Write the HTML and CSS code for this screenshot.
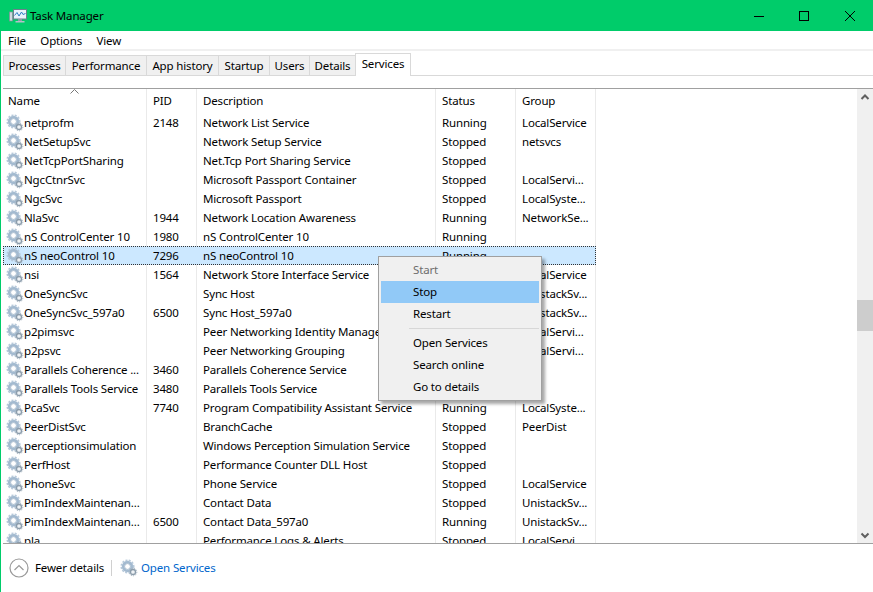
FILE: index.html
```html
<!DOCTYPE html>
<html lang="en">
<head>
<meta charset="utf-8">
<title>Task Manager</title>
<link rel="stylesheet" href="styles.css">
</head>
<body>
<svg class="defs" width="0" height="0" aria-hidden="true">
  <symbol id="gear" viewBox="0 0 18 18">
    <circle cx="7.5" cy="7.5" r="4.4" fill="none" stroke="#a3bad0" stroke-width="2.6"/>
    <circle cx="7.5" cy="7.5" r="6.2" fill="none" stroke="#b7c9da" stroke-width="1.7" stroke-dasharray="2 1.3"/>
    <circle cx="7.5" cy="7.5" r="2.9" fill="#fff" stroke="#8aa3bc" stroke-width="0.7"/>
    <circle cx="13" cy="13" r="2.5" fill="#eef2f5" stroke="#8b9cab" stroke-width="1.3"/>
    <circle cx="13" cy="13" r="3.8" fill="none" stroke="#a2b1be" stroke-width="1" stroke-dasharray="1.3 1"/>
  </symbol>
</svg>
<div class="window">
  <header class="titlebar">
    <svg class="app-icon" width="18" height="16" viewBox="0 0 18 16">
      <rect x="0.5" y="4" width="3" height="9" fill="#cfd8de" stroke="#7f8f99" stroke-width="0.7"/>
      <rect x="4.5" y="1.5" width="13" height="9.5" fill="#e8f3fb" stroke="#6d7f8c"/>
      <path d="M5.5 7.5 L8 4.5 L10 8 L12.5 4 L14 6.5 L16.5 5.5" fill="none" stroke="#2d7fc4"/>
      <rect x="9" y="11" width="4" height="2" fill="#8b9aa5"/>
      <rect x="6.5" y="13" width="9" height="1.5" fill="#b4c0c8"/>
    </svg>
    <span class="title">Task Manager</span>
    <div class="controls">
      <svg width="10" height="10" viewBox="0 0 10 10"><path d="M0 5.5H10" stroke="#000" fill="none"/></svg>
      <svg width="10" height="10" viewBox="0 0 10 10"><rect x="0.5" y="0.5" width="9" height="9" stroke="#000" fill="none"/></svg>
      <svg class="close" width="10" height="10" viewBox="0 0 10 10"><path d="M0 0L10 10M10 0L0 10" stroke="#000" fill="none"/></svg>
    </div>
  </header>
  <nav class="menubar">
    <span>File</span><span>Options</span><span>View</span>
  </nav>
  <div class="tabs">
    <span class="tab">Processes</span>
    <span class="tab">Performance</span>
    <span class="tab">App history</span>
    <span class="tab">Startup</span>
    <span class="tab">Users</span>
    <span class="tab">Details</span>
    <span class="tab active">Services</span>
  </div>
  <main class="pane">
    <div class="listview">
      <div class="row head">
        <span class="cell name">Name</span><span class="cell">PID</span><span class="cell">Description</span><span class="cell">Status</span><span class="cell">Group</span>
        <svg class="sort" width="9" height="5" viewBox="0 0 9 5"><path d="M0.5 4.5L4.5 0.5L8.5 4.5" fill="none" stroke="#777"/></svg>
      </div>
      <div class="row"><span class="cell name"><svg class="gear"><use href="#gear"/></svg>netprofm</span><span class="cell">2148</span><span class="cell">Network List Service</span><span class="cell">Running</span><span class="cell">LocalService</span></div>
      <div class="row"><span class="cell name"><svg class="gear"><use href="#gear"/></svg>NetSetupSvc</span><span class="cell"></span><span class="cell">Network Setup Service</span><span class="cell">Stopped</span><span class="cell">netsvcs</span></div>
      <div class="row"><span class="cell name"><svg class="gear"><use href="#gear"/></svg>NetTcpPortSharing</span><span class="cell"></span><span class="cell">Net.Tcp Port Sharing Service</span><span class="cell">Stopped</span><span class="cell"></span></div>
      <div class="row"><span class="cell name"><svg class="gear"><use href="#gear"/></svg>NgcCtnrSvc</span><span class="cell"></span><span class="cell">Microsoft Passport Container</span><span class="cell">Stopped</span><span class="cell">LocalServi...</span></div>
      <div class="row"><span class="cell name"><svg class="gear"><use href="#gear"/></svg>NgcSvc</span><span class="cell"></span><span class="cell">Microsoft Passport</span><span class="cell">Stopped</span><span class="cell">LocalSyste...</span></div>
      <div class="row"><span class="cell name"><svg class="gear"><use href="#gear"/></svg>NlaSvc</span><span class="cell">1944</span><span class="cell">Network Location Awareness</span><span class="cell">Running</span><span class="cell">NetworkSe...</span></div>
      <div class="row"><span class="cell name"><svg class="gear"><use href="#gear"/></svg>nS ControlCenter 10</span><span class="cell">1980</span><span class="cell">nS ControlCenter 10</span><span class="cell">Running</span><span class="cell"></span></div>
      <div class="row selected"><span class="cell name"><svg class="gear"><use href="#gear"/></svg>nS neoControl 10</span><span class="cell">7296</span><span class="cell">nS neoControl 10</span><span class="cell">Running</span><span class="cell"></span></div>
      <div class="row"><span class="cell name"><svg class="gear"><use href="#gear"/></svg>nsi</span><span class="cell">1564</span><span class="cell">Network Store Interface Service</span><span class="cell">Running</span><span class="cell">LocalService</span></div>
      <div class="row"><span class="cell name"><svg class="gear"><use href="#gear"/></svg>OneSyncSvc</span><span class="cell"></span><span class="cell">Sync Host</span><span class="cell">Stopped</span><span class="cell">UnistackSv...</span></div>
      <div class="row"><span class="cell name"><svg class="gear"><use href="#gear"/></svg>OneSyncSvc_597a0</span><span class="cell">6500</span><span class="cell">Sync Host_597a0</span><span class="cell">Running</span><span class="cell">UnistackSv...</span></div>
      <div class="row"><span class="cell name"><svg class="gear"><use href="#gear"/></svg>p2pimsvc</span><span class="cell"></span><span class="cell">Peer Networking Identity Manager</span><span class="cell">Stopped</span><span class="cell">LocalServi...</span></div>
      <div class="row"><span class="cell name"><svg class="gear"><use href="#gear"/></svg>p2psvc</span><span class="cell"></span><span class="cell">Peer Networking Grouping</span><span class="cell">Stopped</span><span class="cell">LocalServi...</span></div>
      <div class="row"><span class="cell name"><svg class="gear"><use href="#gear"/></svg>Parallels Coherence ...</span><span class="cell">3460</span><span class="cell">Parallels Coherence Service</span><span class="cell">Running</span><span class="cell"></span></div>
      <div class="row"><span class="cell name"><svg class="gear"><use href="#gear"/></svg>Parallels Tools Service</span><span class="cell">3480</span><span class="cell">Parallels Tools Service</span><span class="cell">Running</span><span class="cell"></span></div>
      <div class="row"><span class="cell name"><svg class="gear"><use href="#gear"/></svg>PcaSvc</span><span class="cell">7740</span><span class="cell">Program Compatibility Assistant Service</span><span class="cell">Running</span><span class="cell">LocalSyste...</span></div>
      <div class="row"><span class="cell name"><svg class="gear"><use href="#gear"/></svg>PeerDistSvc</span><span class="cell"></span><span class="cell">BranchCache</span><span class="cell">Stopped</span><span class="cell">PeerDist</span></div>
      <div class="row"><span class="cell name"><svg class="gear"><use href="#gear"/></svg>perceptionsimulation</span><span class="cell"></span><span class="cell">Windows Perception Simulation Service</span><span class="cell">Stopped</span><span class="cell"></span></div>
      <div class="row"><span class="cell name"><svg class="gear"><use href="#gear"/></svg>PerfHost</span><span class="cell"></span><span class="cell">Performance Counter DLL Host</span><span class="cell">Stopped</span><span class="cell"></span></div>
      <div class="row"><span class="cell name"><svg class="gear"><use href="#gear"/></svg>PhoneSvc</span><span class="cell"></span><span class="cell">Phone Service</span><span class="cell">Stopped</span><span class="cell">LocalService</span></div>
      <div class="row"><span class="cell name"><svg class="gear"><use href="#gear"/></svg>PimIndexMaintenan...</span><span class="cell"></span><span class="cell">Contact Data</span><span class="cell">Stopped</span><span class="cell">UnistackSv...</span></div>
      <div class="row"><span class="cell name"><svg class="gear"><use href="#gear"/></svg>PimIndexMaintenan...</span><span class="cell">6500</span><span class="cell">Contact Data_597a0</span><span class="cell">Running</span><span class="cell">UnistackSv...</span></div>
      <div class="row"><span class="cell name"><svg class="gear"><use href="#gear"/></svg>pla</span><span class="cell"></span><span class="cell">Performance Logs &amp; Alerts</span><span class="cell">Stopped</span><span class="cell">LocalServi...</span></div>
    </div>
    <div class="scrollbar">
      <svg width="16" height="16" viewBox="0 0 16 16"><path d="M4.5 10L8 6.5L11.5 10" fill="none" stroke="#606060" stroke-width="2"/></svg>
      <div class="track"><div class="thumb"></div></div>
      <svg width="16" height="16" viewBox="0 0 16 16"><path d="M4.5 6.5L8 10L11.5 6.5" fill="none" stroke="#606060" stroke-width="2"/></svg>
    </div>
    <ul class="context">
      <li class="disabled">Start</li>
      <li class="hot">Stop</li>
      <li>Restart</li>
      <li class="sep"></li>
      <li>Open Services</li>
      <li>Search online</li>
      <li>Go to details</li>
    </ul>
  </main>
  <footer class="footer">
    <svg class="collapse" width="20" height="20" viewBox="0 0 20 20"><circle cx="10" cy="10" r="9" fill="none" stroke="#9a9a9a" stroke-width="1.2"/><path d="M5.5 12L10 7.5L14.5 12" fill="none" stroke="#9a9a9a" stroke-width="1.2"/></svg>
    <span class="fewer">Fewer details</span>
    <span class="divider"></span>
    <svg class="gear-large"><use href="#gear"/></svg>
    <a class="link">Open Services</a>
  </footer>
</div>
</body>
</html>
```

FILE: styles.css
```css
* { box-sizing: border-box; }
html, body { margin: 0; height: 100%; overflow: hidden; background: #fff; }
body { font: 11.5px/16px "Noto Sans", "Open Sans", sans-serif; letter-spacing: -0.15px; color: #000; }
.defs { position: absolute; }
.window { display: flex; flex-direction: column; height: 592px; border-left: 1px solid #00cc6a; }

.titlebar { flex: 0 0 31px; background: #00cc6a; display: flex; align-items: center; padding-left: 8px; }
.app-icon { margin-right: 3px; }
.title { flex: 1; }
.controls { display: flex; gap: 35px; padding-right: 18px; }
.controls svg { display: block; }
.controls .close { margin-left: 1px; }

.menubar { flex: 0 0 18px; display: flex; align-items: center; gap: 14.5px; padding: 1px 0 0 7px; }

.tabs { flex: 0 0 39px; padding: 2px 0 0 2px; border-top: 2px solid #f0f0f0; display: grid; grid-template-columns: 62px 81px 72px 51px 40px 46px 56px; align-items: start; position: relative; }
.tabs::after { content: ""; position: absolute; left: 2px; right: 0; top: 24px; border-top: 1px solid #d9d9d9; }
.tab { height: 21px; margin-top: 2px; background: #f0f0f0; border: 1px solid #d9d9d9; border-right: 0; display: flex; align-items: center; justify-content: center; }
.tab.active { height: 23px; margin-top: 0; padding-bottom: 2px; background: #fff; border-right: 1px solid #d9d9d9; border-bottom: 0; position: relative; z-index: 1; }

.pane { flex: 1; min-height: 0; display: flex; position: relative; border-top: 1px solid #a0a0a0; border-bottom: 1px solid #a0a0a0; margin-left: 2px; }
.listview { flex: 1; overflow: hidden; }
.row { width: 593px; height: 19px; display: grid; grid-template-columns: 144px 50px 239px 80px 80px; position: relative; }
.row.head { height: 24px; }
.cell { padding-left: 6px; white-space: nowrap; overflow: hidden; border-right: 1px solid #eaeaea; display: flex; align-items: center; }
.cell.name { padding-left: 3px; }
.head .cell.name { padding-left: 5px; }
.sort { position: absolute; left: 67px; top: 0; }
.gear { width: 18px; height: 18px; flex: none; }
.selected { background: #cce8ff; outline: 1px dotted #333; outline-offset: -1px; }
.selected .cell { border-right-color: transparent; }

.scrollbar { flex: 0 0 16px; background: #f0f0f0; display: flex; flex-direction: column; }
.scrollbar svg { flex: none; display: block; }
.track { flex: 1; padding-top: 195px; }
.thumb { height: 31px; background: #cdcdcd; }

.context { position: absolute; left: 375px; top: 167px; width: 164px; margin: 0; padding: 2px; list-style: none; background: #f0f0f0; border: 1px solid #a0a0a0; box-shadow: 3px 3px 3px rgba(0,0,0,.35); }
.context li { height: 22px; line-height: 22px; padding-left: 32px; }
.context .disabled { color: #6d6d6d; }
.context .hot { background: #91c9f7; }
.context .sep { height: 7px; margin: 0 0 0 28px; padding: 0; background: linear-gradient(#d7d7d7,#d7d7d7) center / 100% 1px no-repeat; }

.footer { flex: 0 0 48px; display: flex; align-items: center; padding-left: 8px; }
.fewer { margin-left: 6px; width: 68px; white-space: nowrap; }
.divider { width: 1px; height: 16px; background: #d0d0d0; margin: 0 8px; flex: none; }
.gear-large { width: 18px; height: 18px; margin-right: 3px; }
.link { color: #0066cc; }
```
